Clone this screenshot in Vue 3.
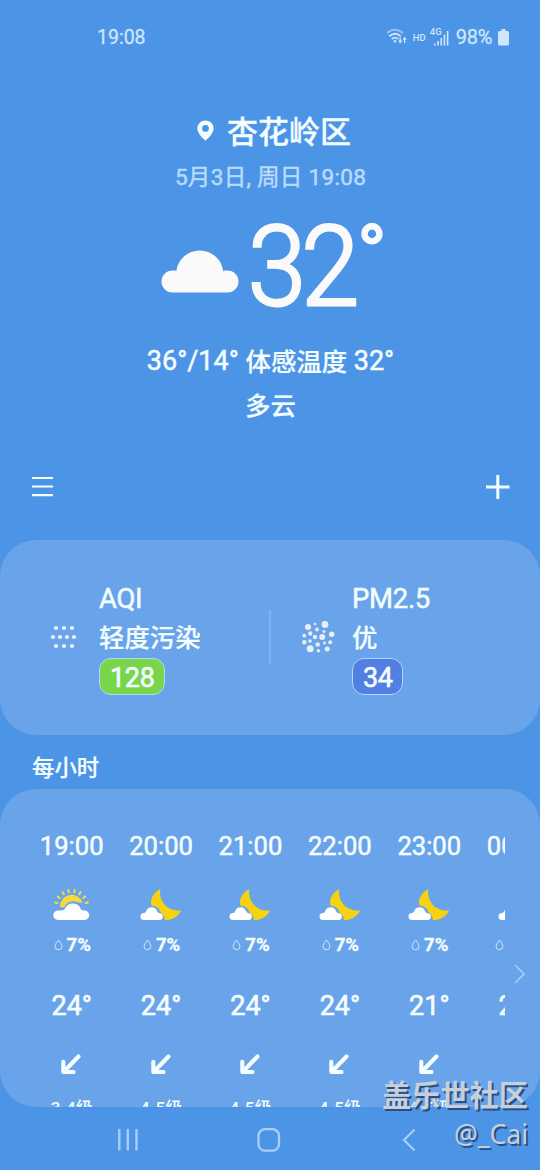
<script setup>
const hours = [
  { time: '19:00', icon: 'sun', rain: '7%', temp: '24°', wind: '3-4级' },
  { time: '20:00', icon: 'moon', rain: '7%', temp: '24°', wind: '4-5级' },
  { time: '21:00', icon: 'moon', rain: '7%', temp: '24°', wind: '4-5级' },
  { time: '22:00', icon: 'moon', rain: '7%', temp: '24°', wind: '4-5级' },
  { time: '23:00', icon: 'moon', rain: '7%', temp: '21°', wind: '4-5级' },
  { time: '00:00', icon: 'moon', rain: '10%', temp: '21°', wind: '4-5级' },
]
const rays = [-76, -54, -32, -11, 11, 32, 54, 76]
const aqiDots = [
  [6, 3], [14, 3], [22, 3], [3, 12], [10, 12], [17, 12], [24, 12], [6, 21], [14, 21], [22, 21],
]
const pmDots = [
  [6, 7, 3], [13, 4, 1.3], [23, 4.5, 3.4], [15, 9.5, 2], [22, 11.5, 1.5], [8.3, 13.5, 2.2],
  [2.3, 15.7, 1.9], [29.7, 14.3, 2.7], [13, 17, 2.2], [20.2, 17, 3], [2.3, 22.3, 2.2],
  [8, 21, 1.8], [28.2, 22.3, 2], [22.6, 23, 1.4], [15.7, 24.5, 2.3], [8.2, 28.8, 3.5],
  [16.4, 30.7, 1.7], [25.2, 29, 2.5],
]
</script>

<template>
  <main class="screen">
    <header class="status">
      <span class="clock">19:08</span>
      <div class="indicators">
        <svg class="wifi" width="22" height="18" viewBox="0 0 22 18" fill="none" stroke="#cfe6fc" stroke-width="1.8">
          <path d="M1 5.2Q9 -1.8 17 5.2" opacity=".55" />
          <path d="M3.3 8.2Q9 3.2 14.7 8.2" />
          <path d="M5.8 11Q9 8.2 12.2 11" />
          <circle cx="9" cy="13.3" r="1.3" fill="#cfe6fc" stroke="none" />
          <path d="M14.2 9.6V14.5M18.6 15V10" stroke-width="1.3" />
          <path d="M12 12.6h4.4l-2.2 3zM16.5 11.6h4.2l-2.1-2.8z" fill="#cfe6fc" stroke="none" />
        </svg>
        <span class="hd">HD</span>
        <div class="cell">
          <span class="gen">4G</span>
          <svg width="15" height="16" viewBox="0 0 15 16" fill="#cfe6fc">
            <path d="M0 13.5h1.6v2H0zM3.2 11h1.6v4.5H3.2zM6.4 8h1.6v7.5H6.4zM9.6 4.5h1.6v11H9.6zM12.8 1h1.6v14.5h-1.6z" />
          </svg>
        </div>
        <span class="percent">98%</span>
        <svg class="battery" width="11" height="17" viewBox="0 0 11 17" fill="#cfe6fc">
          <path d="M3.5 0h4v2H9.5Q11 2 11 3.5V15Q11 16.5 9.5 16.5H1.5Q0 16.5 0 15V3.5Q0 2 1.5 2H3.5z" />
        </svg>
      </div>
    </header>

    <section class="summary">
      <div class="place">
        <svg width="17" height="22" viewBox="0 0 17 22" fill="#f4fdff">
          <path fill-rule="evenodd" d="M8.5 .5C13 .5 16.6 4 16.6 8.5C16.6 13 12.5 17 8.5 20.8C4.5 17 .4 13 .4 8.5C.4 4 4 .5 8.5 .5ZM8.5 5A3.4 3.4 0 1 0 8.5 11.8A3.4 3.4 0 1 0 8.5 5Z" />
        </svg>
        <h1>杏花岭区</h1>
      </div>
      <p class="date">5月3日, 周日 19:08</p>
      <div class="now">
        <svg width="78" height="45" viewBox="0 0 78 45" fill="#fafafa">
          <path d="M11.5 44.5A11 11 0 0 1 11.5 22.5H14.5L15.2 23.5A23.7 23.7 0 0 1 62.3 23.5L63.5 22.5H66.5A11 11 0 0 1 66.5 44.5Z" />
        </svg>
        <span class="degrees">32</span>
        <span class="ring">°</span>
      </div>
      <p class="range"><span>36°/14°&nbsp;</span><span class="han">体感温度</span><span>&nbsp;32°</span></p>
      <p class="condition">多云</p>
    </section>

    <nav class="actions">
      <svg width="22" height="22" viewBox="0 0 22 22" stroke="#f4fdff" stroke-width="2.2">
        <path d="M0 2H21M0 10.5H21M0 19.2H21" />
      </svg>
      <svg width="24" height="24" viewBox="0 0 24 24" stroke="#f4fdff" stroke-width="3">
        <path d="M0 12H23.5M11.8 0V24" />
      </svg>
    </nav>

    <section class="card air">
      <div class="metric aqi">
        <svg width="27" height="24" viewBox="0 0 27 24" fill="#eaf3fc">
          <circle v-for="(d, i) in aqiDots" :key="i" :cx="d[0]" :cy="d[1]" r="2.1" />
        </svg>
        <div class="info">
          <span class="name">AQI</span>
          <span class="level">轻度污染</span>
          <span class="badge green">128</span>
        </div>
      </div>
      <div class="divider"></div>
      <div class="metric pm">
        <svg width="33" height="33" viewBox="0 0 33 33" fill="#e9edf2">
          <circle v-for="(d, i) in pmDots" :key="i" :cx="d[0]" :cy="d[1]" :r="d[2]" />
        </svg>
        <div class="info">
          <span class="name">PM2.5</span>
          <span class="level">优</span>
          <span class="badge blue">34</span>
        </div>
      </div>
    </section>

    <h2>每小时</h2>

    <section class="card hourly">
      <div class="track">
        <div v-for="h in hours" :key="h.time" class="hour">
          <span class="time">{{ h.time }}</span>
          <svg v-if="h.icon === 'sun'" class="weather" width="42" height="34" viewBox="0 0 42 34">
            <g stroke="#f5dc3c" stroke-width="2" stroke-linecap="round">
              <path v-for="r in rays" :key="r" d="M20.5 1.6V4" :transform="`rotate(${r} 20.5 18.5)`" />
            </g>
            <path fill="#f5dc3c" d="M9 19A11.6 11.6 0 0 1 31.5 14.5Q27.500 15 26 13.700Q16.500 11.500 13 19.500Z" />
            <path fill="#fff" d="M7 32A4.7 4.7 0 0 1 7 22.5H10.500Q13 22.5 14 20.5A8.600 8.600 0 0 1 30 21.5Q31 22.5 33.500 22.5A4.700 4.700 0 0 1 33.500 32Z" />
          </svg>
          <svg v-else class="weather" width="42" height="34" viewBox="0 0 42 34">
            <path fill="#f6d211" d="M20.3 1C18.5 13 27.5 24 41 22.4C38 29 31 32.3 25 32Q24.7 29 22.7 26.3Q20 24.5 19.3 21.5Q17 18 11.5 17.5C9.500 10.5 14 4.500 20.3 1Z" />
            <path fill="#fff" d="M4 32A3.5 3.5 0 0 1 4 25Q5.8 25 6.5 22.5A5.7 5.7 0 0 1 17 23Q17.5 25 19.5 25.2A3.4 3.4 0 0 1 19.5 32Z" />
          </svg>
          <div class="rain">
            <svg width="9" height="12" viewBox="0 0 9 12" fill="none" stroke="#d7ebff" stroke-width=".9">
              <path d="M4.5 1Q8 5.2 8 7.3A3.5 3.5 0 0 1 1 7.3Q1 5.2 4.5 1Z" />
            </svg>
            <b>{{ h.rain }}</b>
          </div>
          <span class="temp">{{ h.temp }}</span>
          <svg class="arrow" width="21" height="21" viewBox="0 0 21 21" fill="none" stroke="#f4fdff" stroke-width="4.100" stroke-linecap="round" stroke-linejoin="round">
            <path d="M17.500 2.500L3.200 17.200M2.300 7.800V18H12.600" />
          </svg>
          <span class="wind">{{ h.wind }}</span>
        </div>
      </div>
      <svg class="more" width="12" height="20" viewBox="0 0 12 20" fill="none" stroke="#a9cdf5" stroke-width="1.7">
        <path d="M1 1L10 10L1 19" />
      </svg>
    </section>

    <footer class="navbar">
      <svg width="22" height="24" viewBox="0 0 22 24" stroke="#a9cef7" stroke-width="2.4">
        <path d="M2.3 1V22.5M10.8 1V22.5M19.5 1V22.5" />
      </svg>
      <svg class="home" width="24" height="24" viewBox="0 0 24 24" fill="none" stroke="#a9cef7" stroke-width="2.3">
        <rect x="1.5" y="1.2" width="20.5" height="21.5" rx="6.5" />
      </svg>
      <svg width="14" height="24" viewBox="0 0 14 24" fill="none" stroke="#a9cef7" stroke-width="2.2">
        <path d="M12.5 1.5L2 12L12.5 22.5" />
      </svg>
    </footer>

    <div class="watermark">
      <span class="community">盖乐世社区</span>
      <span class="author">@_Cai</span>
    </div>
  </main>
</template>

<style>
body {
  background: #4c94e6;
}
</style>

<style scoped>
.screen {
  position: relative;
  width: 540px;
  height: 1170px;
  overflow: hidden;
  display: flex;
  flex-direction: column;
  background: #4c94e6;
  color: #f4fdff;
  font-family: Roboto, "Noto Sans CJK SC", sans-serif;
  white-space: nowrap;
}
.screen > * { flex: none; }
svg { display: block; flex: none; }
p, h1, h2 { margin: 0; }
.status {
  height: 74px;
  box-sizing: border-box;
  padding: 0 31px 0 97px;
  display: flex;
  align-items: center;
  justify-content: space-between;
  color: #cfe6fc;
}
.clock { font-size: 19.5px; -webkit-text-stroke: .3px; }
.indicators { display: flex; align-items: center; }
.hd { font-size: 9.5px; font-weight: 500; margin: 0 4px 0 5px; }
.cell { position: relative; width: 19px; height: 18px; display: flex; justify-content: flex-end; align-items: flex-end; }
.gen { position: absolute; left: 0; top: -1px; font-size: 9.5px; line-height: 10px; font-weight: 500; }
.percent { font-size: 20px; margin: 0 6px 0 7px; letter-spacing: -.3px; -webkit-text-stroke: .3px; }
.summary { height: 361px; display: flex; flex-direction: column; align-items: center; }
.place { height: 62px; margin-top: 26px; display: flex; align-items: center; gap: 13px; padding-left: 8px; }
.place svg { margin-top: -1px; }
h1 { font-size: 31px; line-height: 62px; font-weight: 500; padding-top: 3px; -webkit-text-stroke: .3px; }
.date { font-size: 22.6px; line-height: 32px; height: 30px; padding-left: 1px; color: #b7dbfd; letter-spacing: .25px; -webkit-text-stroke: .5px #b7dbfd; }
.now { height: 150px; width: 222px; margin-left: 3px; display: flex; align-items: flex-start; }
.now svg { margin-top: 56px; }
.degrees { width: 122px; font-size: 111px; line-height: 134px; margin: 8px 0 0 9px; letter-spacing: -4.8px; color: #fafafa; font-weight: 300; -webkit-text-stroke: 3px #fafafa; transform: scaleX(.94); transform-origin: 0 50%; }
.ring { font-size: 77px; line-height: 77px; font-weight: 700; color: #fafafa; margin: 24px 0 0 -4px; -webkit-text-stroke: 1px #fafafa; }
.range { height: 44px; margin-top: -3px; padding-left: 1px; display: flex; align-items: center; font-size: 27px; line-height: 44px; -webkit-text-stroke: .5px; }
.han { font-size: 25.4px; font-weight: 500; -webkit-text-stroke: .2px; padding-top: 1px; }
.condition { font-size: 25.4px; line-height: 46px; font-weight: 500; padding-left: 1px; -webkit-text-stroke: .2px; }
.actions { height: 105px; box-sizing: border-box; padding: 0 30px 2px 32px; display: flex; align-items: center; justify-content: space-between; }
.card { background: #69a4ea; border-radius: 36px; }
.air { height: 195px; display: flex; align-items: center; }
.metric { display: flex; align-items: center; box-sizing: border-box; }
.metric > svg { margin-top: -2px; }
.aqi { width: 269px; padding-left: 50px; gap: 22px; }
.pm { padding-left: 31px; gap: 17px; }
.divider { width: 2px; height: 54px; background: #7eb2f0; margin-top: -2px; }
.info { display: flex; flex-direction: column; align-items: flex-start; margin-top: -3px; }
.name { font-size: 27.5px; line-height: 41px; height: 39px; -webkit-text-stroke: .5px; letter-spacing: -.3px; }
.level { font-size: 25.4px; line-height: 43px; height: 41px; font-weight: 500; -webkit-text-stroke: .2px; }
.badge { box-sizing: border-box; height: 37px; line-height: 38px; padding: 0 9px 0 10px; border: 1px solid #b4d9f5; border-radius: 12px; font-size: 27px; -webkit-text-stroke: .6px; letter-spacing: -.3px; }
.green { background: #78d64b; }
.blue { background: #527fe4; }
h2 { height: 54px; line-height: 66px; padding-left: 32px; font-size: 22.4px; font-weight: 500; -webkit-text-stroke: .2px; }
.hourly { height: 318px; overflow: hidden; display: flex; align-items: flex-start; }
.track { width: 478px; height: 318px; margin-left: 27px; overflow: hidden; display: flex; }
.hour { flex: none; width: 89.4px; height: 340px; display: flex; flex-direction: column; align-items: center; }
.time { height: 40px; margin-top: 37px; line-height: 41px; font-size: 25.6px; -webkit-text-stroke: .5px; }
.weather { margin-top: 22px; }
.rain { height: 24px; margin-top: 11px; display: flex; align-items: center; gap: 4px; padding-left: 1px; font-size: 18.5px; line-height: 24px; -webkit-text-stroke: .3px; }
.temp { height: 34px; margin-top: 32px; line-height: 34px; font-size: 27px; -webkit-text-stroke: .6px; }
.arrow { margin-top: 31px; }
.wind { margin-top: 20px; font-size: 17px; line-height: 26px; font-weight: 500; }
.more { margin: 175px 0 0 9px; }
.navbar { height: 63px; padding: 3px 124px 0 117px; display: flex; align-items: center; justify-content: space-between; box-sizing: border-box; }
.home { margin-right: 3px; }
.watermark { position: absolute; right: 12px; top: 1077px; display: flex; flex-direction: column; align-items: flex-end; color: #c5d0dc; text-shadow: 2px 2px 0 #2b4f80; }
.community { font-size: 29.2px; line-height: 38px; font-weight: 700; }
.author { font-family: "Noto Sans", "Noto Sans CJK SC", sans-serif; font-size: 26.5px; line-height: 38px; }
</style>
